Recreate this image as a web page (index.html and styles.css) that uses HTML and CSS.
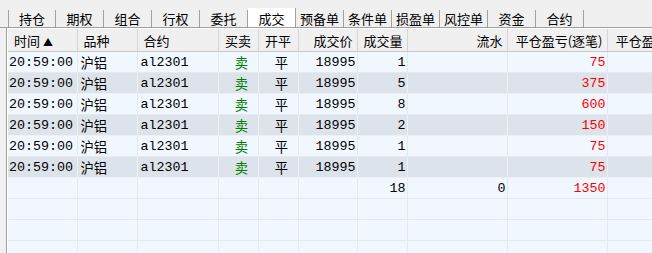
FILE: index.html
```html
<!DOCTYPE html>
<html lang="zh-CN">
<head>
    <meta charset="UTF-8">
    <title>成交</title>
    <link rel="stylesheet" href="styles.css">
</head>
<body>

    <div class="tabs">
        <div class="tab">持仓</div>
        <div class="tab">期权</div>
        <div class="tab">组合</div>
        <div class="tab">行权</div>
        <div class="tab">委托</div>
        <div class="tab active">成交</div>
        <div class="tab">预备单</div>
        <div class="tab">条件单</div>
        <div class="tab">损盈单</div>
        <div class="tab">风控单</div>
        <div class="tab">资金</div>
        <div class="tab">合约</div>
    </div>

    <div class="pane">
        <table class="grid">
            <colgroup>
                <col style="width:69px">
                <col style="width:60px">
                <col style="width:81px">
                <col style="width:40px">
                <col style="width:40px">
                <col style="width:59px">
                <col style="width:50px">
                <col style="width:100px">
                <col style="width:100px">
                <col style="width:100px">
            </colgroup>
            <thead>
                <tr>
                    <th class="l">时间 <span class="sort">▲</span></th>
                    <th class="l">品种</th>
                    <th class="l">合约</th>
                    <th class="c">买卖</th>
                    <th class="c">开平</th>
                    <th class="r">成交价</th>
                    <th class="r">成交量</th>
                    <th class="r">流水</th>
                    <th class="r">平仓盈亏(逐笔)</th>
                    <th class="r">平仓盈亏(逐日)</th>
                </tr>
            </thead>
            <tbody>
                <tr>
                    <td class="time">20:59:00</td><td class="name">沪铝</td><td class="name">al2301</td>
                    <td class="side sell">卖</td><td class="side">平</td>
                    <td class="num">18995</td><td class="num">1</td><td></td><td class="num red">75</td><td></td>
                </tr>
                <tr class="alt">
                    <td class="time">20:59:00</td><td class="name">沪铝</td><td class="name">al2301</td>
                    <td class="side sell">卖</td><td class="side">平</td>
                    <td class="num">18995</td><td class="num">5</td><td></td><td class="num red">375</td><td></td>
                </tr>
                <tr>
                    <td class="time">20:59:00</td><td class="name">沪铝</td><td class="name">al2301</td>
                    <td class="side sell">卖</td><td class="side">平</td>
                    <td class="num">18995</td><td class="num">8</td><td></td><td class="num red">600</td><td></td>
                </tr>
                <tr class="alt">
                    <td class="time">20:59:00</td><td class="name">沪铝</td><td class="name">al2301</td>
                    <td class="side sell">卖</td><td class="side">平</td>
                    <td class="num">18995</td><td class="num">2</td><td></td><td class="num red">150</td><td></td>
                </tr>
                <tr>
                    <td class="time">20:59:00</td><td class="name">沪铝</td><td class="name">al2301</td>
                    <td class="side sell">卖</td><td class="side">平</td>
                    <td class="num">18995</td><td class="num">1</td><td></td><td class="num red">75</td><td></td>
                </tr>
                <tr class="alt">
                    <td class="time">20:59:00</td><td class="name">沪铝</td><td class="name">al2301</td>
                    <td class="side sell">卖</td><td class="side">平</td>
                    <td class="num">18995</td><td class="num">1</td><td></td><td class="num red">75</td><td></td>
                </tr>
                <tr>
                    <td></td><td></td><td></td><td></td><td></td><td></td>
                    <td class="num">18</td><td class="num">0</td><td class="num red">1350</td><td></td>
                </tr>
                <tr><td></td><td></td><td></td><td></td><td></td><td></td><td></td><td></td><td></td><td></td></tr>
                <tr><td></td><td></td><td></td><td></td><td></td><td></td><td></td><td></td><td></td><td></td></tr>
                <tr><td></td><td></td><td></td><td></td><td></td><td></td><td></td><td></td><td></td><td></td></tr>
            </tbody>
        </table>
    </div>

</body>
</html>
```

FILE: styles.css
```css
body {
    margin: 0;
    width: 652px;
    height: 253px;
    overflow: hidden;
    background-color: #f0f0f0;
    font-family: "Noto Sans CJK SC", "Liberation Sans", sans-serif;
    font-size: 13px;
    color: #000;
}
.tabs {
    display: flex;
    height: 19px;
    padding: 8px 0 0 8px;
    border-bottom: 1px solid #a0a0a0;
}
.tab {
    width: 47px;
    height: 17px;
    margin-top: 2px;
    border-right: 1px solid #a0a0a0;
    text-align: center;
    line-height: 17px;
    flex-shrink: 0;
}
.tab:first-child {
    border-left: 1px solid #a0a0a0;
    width: 46px;
}
.tab.active {
    background-color: #fff;
    margin-top: 0;
    height: 19px;
    line-height: 21px;
}
.pane {
    margin-left: 6px;
    border-left: 1px solid #a0a0a0;
    padding-left: 1px;
    padding-top: 1px;
    background-color: #fff;
    height: 230px;
}
.grid {
    border-collapse: collapse;
    table-layout: fixed;
    width: 699px;
    background-color: #f0f7ff;
}
.grid th {
    height: 22px;
    padding: 0 4px;
    font-weight: normal;
    background-color: #f0f0f0;
    border-right: 1px solid #d5d5d5;
    border-bottom: 1px solid #c8c8c8;
    white-space: nowrap;
    overflow: hidden;
}
.grid th.l { text-align: left; padding-left: 6px; }
.grid th.c { text-align: center; }
.grid th.r { text-align: right; }
.sort {
    font-size: 10px;
}
.grid td {
    height: 20px;
    padding: 0 1px;
    border-right: 1px solid #e6e9ec;
    border-bottom: 1px solid #e6e9ec;
    font-family: "Liberation Mono", "Noto Sans CJK SC", monospace;
    font-size: 13.33px;
    white-space: nowrap;
    overflow: hidden;
}
.grid tr.alt td {
    background-color: #dde3ea;
    border-color: #eef0f3;
}
.grid td.name { padding-left: 3px; }
.grid td.side { text-align: center; padding-left: 8px; }
.grid td.num { text-align: right; }
.sell { color: #008000; }
.red { color: #ff0000; }
```
